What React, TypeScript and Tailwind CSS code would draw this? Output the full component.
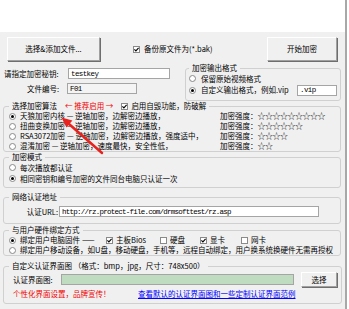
import React from 'react';

/* ── small win32-ish controls ─────────────────────────────── */
function Radio({ checked }: { checked?: boolean }) {
  return (
    <span className="w-[7px] h-[7px] rounded-full border border-[#8a8a8a] bg-white flex items-center justify-center shrink-0">
      {checked && <span className="w-[3px] h-[3px] rounded-full bg-black" />}
    </span>
  );
}

function Check({ checked }: { checked?: boolean }) {
  return (
    <span className="w-[7px] h-[7px] border border-[#8a8a8a] bg-white flex items-center justify-center shrink-0">
      {checked && (
        <svg width="5" height="5" viewBox="0 0 5 5">
          <path d="M0.4 2.4 L1.9 3.9 L4.6 0.9" stroke="#000" strokeWidth="1.1" fill="none" />
        </svg>
      )}
    </span>
  );
}

function WinButton({ children, className }: { children: React.ReactNode; className: string }) {
  return (
    <button
      className={`flex items-center justify-center bg-[#f0f0f0] border border-t-white border-l-white border-r-[#a0a0a0] border-b-[#a0a0a0] shadow-[1px_1px_0_#6e6e6e] ${className}`}
    >
      {children}
    </button>
  );
}

function Group({
  title,
  className,
  children,
}: {
  title: React.ReactNode;
  className: string;
  children: React.ReactNode;
}) {
  return (
    <fieldset className={`border border-[#d0d0d0] rounded-[3px] ${className}`}>
      <legend className="px-[3px] h-[10px] leading-[10px]">{title}</legend>
      {children}
    </fieldset>
  );
}

function Stars({ n }: { n: number }) {
  return (
    <span className="flex">
      {Array.from({ length: n }).map((_, i) => (
        <span key={i} className="w-[7.5px] text-center text-[8px] leading-[10px] text-[#222]">
          ☆
        </span>
      ))}
    </span>
  );
}

/* ── data ─────────────────────────────────────────────────── */
const algorithms = [
  { text: '天狼加密内核 — 逆轴加密，边解密边播放，', stars: 9, checked: true },
  { text: '扭曲变换加密 — 逆轴加密，边解密边播放，', stars: 6 },
  { text: 'RSA3072加密 — 逆轴加密，边解密边播放，强度适中，', stars: 4 },
  { text: '混淆加密 — 逆轴加密，速度最快，安全性低，', stars: 2 },
];

const hardware = [
  { label: '主板Bios', checked: true, w: 'w-[54px]' },
  { label: '硬盘', checked: false, w: 'w-[40px]' },
  { label: '显卡', checked: true, w: 'w-[41px]' },
  { label: '网卡', checked: false, w: 'w-[40px]' },
];

export default function App() {
  return (
    <div className="w-[349px] h-[309px] flex overflow-hidden bg-white text-black text-[7.5px] leading-[10px] font-['Noto_Sans_CJK_SC','Liberation_Sans',sans-serif]">
      <div className="w-[345px] flex flex-col">
        <div className="h-[32px] bg-white" />

        <div className="relative flex-1 bg-[#f0f0f0] flex flex-col">
          {/* Top buttons */}
          <div className="flex items-center h-[24px] mt-[5px]">
            <WinButton className="ml-[7px] w-[93px] h-[24px]">选择&amp;添加文件...</WinButton>
            <div className="ml-[33px] flex items-center gap-[4px]">
              <Check checked />
              <span>备份原文件为(*.bak)</span>
            </div>
            <WinButton className="ml-auto mr-[8px] w-[70px] h-[24px]">开始加密</WinButton>
          </div>

          {/* Key / output format */}
          <div className="flex h-[38px] mt-[2px]">
            <div className="w-[182px] flex flex-col pt-[5px] gap-[4px]">
              <div className="flex items-center h-[11px]">
                <span className="w-[68px] pl-[4px] whitespace-nowrap">请指定加密秘钥:</span>
                <input
                  readOnly
                  value="testkey"
                  className="w-[102px] h-[11px] px-[2px] bg-white border border-[#a5a5a5] outline-none text-[7.5px] leading-[9px] font-['Liberation_Mono',monospace] tracking-[-0.6px]"
                />
              </div>
              <div className="flex items-center h-[11px]">
                <span className="w-[67px] pl-[27px] whitespace-nowrap">文件编号:</span>
                <input
                  readOnly
                  value="F01"
                  className="w-[70px] h-[11px] px-[2px] bg-[#f4f4f4] border border-[#a5a5a5] outline-none text-[7.5px] leading-[9px] font-['Liberation_Mono',monospace] tracking-[-0.6px]"
                />
              </div>
            </div>

            <Group title="加密输出格式" className="w-[156px] ml-[3px] pl-[3px] pr-[3px] pb-[4px]">
              <div className="flex items-center h-[11px] gap-[5px]">
                <Radio />
                <span>保留原始视频格式</span>
              </div>
              <div className="flex items-center h-[12px] gap-[5px]">
                <Radio checked />
                <span className="whitespace-nowrap">自定义输出格式，例如.vip</span>
                <input
                  readOnly
                  value=".vip"
                  className="ml-auto w-[40px] h-[11px] px-[2px] bg-white border border-[#a5a5a5] outline-none text-[7.5px] leading-[9px] font-['Liberation_Mono',monospace] tracking-[-0.6px]"
                />
              </div>
            </Group>
          </div>

          {/* Algorithm */}
          <Group
            className="w-[338px] ml-[3px] pl-[5px] pr-[4px]"
            title={
              <span className="inline-flex items-center h-[10px] whitespace-nowrap">
                <span>选择加密算法</span>
                <span className="ml-[8px] text-[#f00000]">← 推荐启用 →</span>
                <span className="ml-[8px]">
                  <Check checked />
                </span>
                <span className="ml-[3px]">启用自毁功能，防破解</span>
              </span>
            }
          >
            {algorithms.map((a) => (
              <div key={a.text} className="flex items-center h-[10px] whitespace-nowrap">
                <Radio checked={a.checked} />
                <span className="ml-[4px] w-[200px]">{a.text}</span>
                <span>加密强度：</span>
                <Stars n={a.stars} />
              </div>
            ))}
          </Group>

          {/* Mode */}
          <Group title="加密模式" className="w-[338px] ml-[3px] pl-[5px] pr-[4px] pb-[3px]">
            <div className="flex items-center h-[11px]">
              <Radio />
              <span className="ml-[4px]">每次播放都认证</span>
            </div>
            <div className="flex items-center h-[11px]">
              <Radio checked />
              <span className="ml-[4px]">相同密钥和编号加密的文件同台电脑只认证一次</span>
            </div>
          </Group>

          {/* Network URL */}
          <Group title="网络认证地址" className="w-[338px] ml-[3px] mt-[4px] pl-[5px] pr-[4px] pt-[4px] pb-[6px]">
            <div className="flex items-center h-[11px]">
              <span className="w-[50px] text-right pr-[1px] whitespace-nowrap">认证URL:</span>
              <input
                readOnly
                value="http://rz.protect-file.com/drmsofttest/rz.asp"
                className="w-[260px] h-[11px] px-[2px] bg-white border border-[#a5a5a5] outline-none text-[7.5px] leading-[9px] font-['Liberation_Mono',monospace] tracking-[-0.75px]"
              />
            </div>
          </Group>

          {/* Hardware binding */}
          <Group title="与用户硬件绑定方式" className="w-[338px] ml-[3px] mt-[1px] pl-[5px] pr-[4px]">
            <div className="flex items-center h-[10px] whitespace-nowrap">
              <Radio checked />
              <span className="ml-[4px] w-[62px]">绑定用户电脑固件</span>
              <span className="w-[24px]">——</span>
              {hardware.map((h) => (
                <div key={h.label} className={`flex items-center gap-[3px] ${h.w}`}>
                  <Check checked={h.checked} />
                  <span>{h.label}</span>
                </div>
              ))}
            </div>
            <div className="flex items-center h-[10px] whitespace-nowrap">
              <Radio />
              <span className="ml-[4px]">
                绑定用户移动设备，如U盘，移动硬盘，手机等，远程自动绑定，用户换系统换硬件无需再授权
              </span>
            </div>
          </Group>

          {/* Custom auth picture */}
          <Group
            title="自定义认证界面图 （格式：bmp，jpg，尺寸：748x500）"
            className="w-[338px] ml-[3px] mt-[5px] pl-[5px] pr-[4px] pb-[4px]"
          >
            <div className="flex items-center h-[15px] mt-[1px]">
              <span className="ml-[4px] w-[48px] whitespace-nowrap">认证界面图:</span>
              <div className="w-[233px] h-[11px] bg-[#c0dcc0] border border-[#a5a5a5]" />
              <WinButton className="ml-[7px] w-[36px] h-[15px]">选择</WinButton>
            </div>
            <div className="flex items-center h-[10px] mt-[2px] whitespace-nowrap">
              <span className="ml-[4px] w-[125px] text-[#f00000]">个性化界面设置，品牌宣传！</span>
              <span className="text-[#0000ff] underline">查看默认的认证界面图和一些定制认证界面范例</span>
            </div>
          </Group>

          {/* Red annotation arrow */}
          <svg className="absolute left-0 top-0 pointer-events-none" width="345" height="277">
            <line x1="102" y1="121" x2="69" y2="92" stroke="#e8231e" strokeWidth="2.5" strokeLinecap="round" />
            <polygon points="61.5,85.5 72.4,88.4 66.4,95.4" fill="#e8231e" />
          </svg>
        </div>
      </div>
      <div className="w-[2px] bg-[#a8a8a8]" />
      <div className="flex-1 bg-white" />
    </div>
  );
}
